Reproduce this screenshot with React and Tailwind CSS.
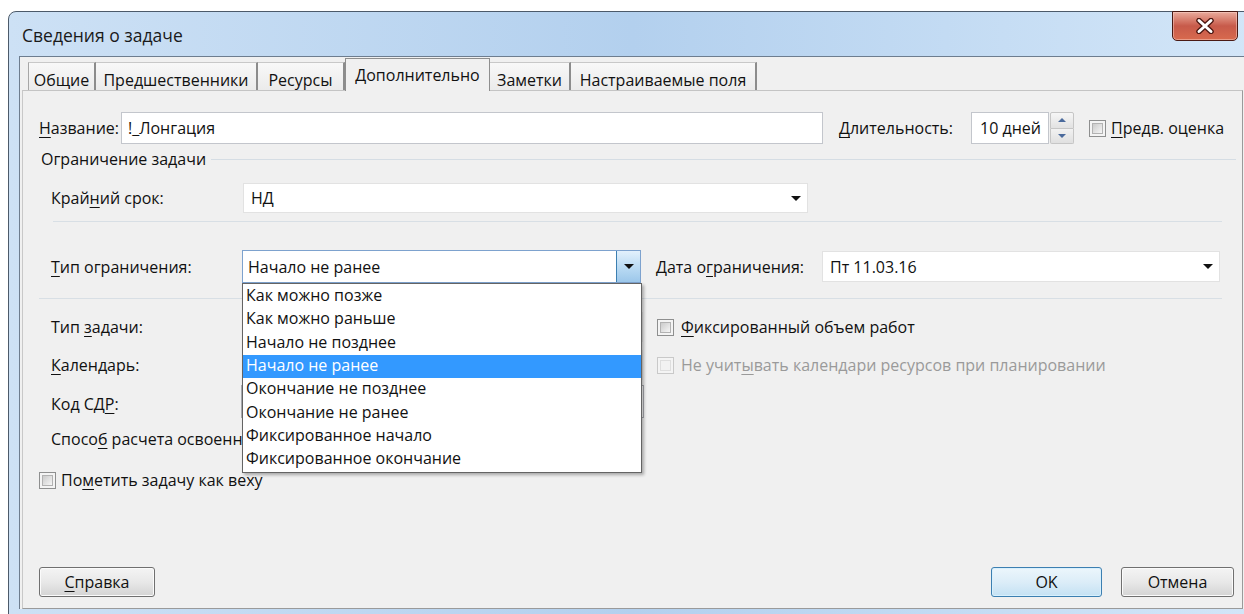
import React from "react";

const TABS = [
  { label: "Общие", w: "w-[68px]" },
  { label: "Предшественники", w: "w-[162px]" },
  { label: "Ресурсы", w: "w-[87px]" },
  { label: "Дополнительно", w: "w-[145px]", active: true },
  { label: "Заметки", w: "w-[81px]" },
  { label: "Настраиваемые поля", w: "w-[186px]" },
];

const OPTIONS = [
  "Как можно позже",
  "Как можно раньше",
  "Начало не позднее",
  "Начало не ранее",
  "Окончание не позднее",
  "Окончание не ранее",
  "Фиксированное начало",
  "Фиксированное окончание",
];

// mnemonic letter
const U = ({ children }) => (
  <span className="underline underline-offset-[3px] decoration-1">{children}</span>
);

const Arrow = () => (
  <svg width="10" height="5" viewBox="0 0 10 5">
    <path d="M0 0h10L5 5z" fill="#111" />
  </svg>
);

function Check({ disabled }) {
  return (
    <span
      className={`inline-flex w-[17px] h-[17px] p-[2px] border ${
        disabled ? "border-[#c9c9c9] bg-[#f4f4f4]" : "border-[#8e8f8f] bg-[#f4f4f4]"
      }`}
    >
      <span
        className={`block w-full h-full border ${
          disabled
            ? "border-[#dedede] bg-[#f2f2f2]"
            : "border-[#b2b2b2] bg-linear-to-br from-[#cbcbcb] to-[#f6f6f6]"
        }`}
      />
    </span>
  );
}

function Combo({ value, className }) {
  return (
    <div className={`flex items-center bg-white border border-[#e2e2e2] ${className}`}>
      <span className="flex-1 pl-[7px] truncate">{value}</span>
      <span className="w-[23px] flex justify-center">
        <Arrow />
      </span>
    </div>
  );
}

function Button({ children, primary, className }) {
  return (
    <div
      className={`h-[30px] flex items-center justify-center rounded-[3px] border ${
        primary
          ? "border-[#3c7fb1] bg-linear-to-b from-[#ecf6fc] via-[#dcedf8] to-[#c4e1f3] shadow-[inset_0_0_0_1px_#d8f0fd]"
          : "border-[#707070] bg-linear-to-b from-[#f4f4f4] via-[#e8e8e8] to-[#d4d4d4] shadow-[inset_0_0_0_1px_#fbfbfb]"
      } ${className}`}
    >
      {children}
    </div>
  );
}

function TypeDropdown() {
  return (
    <div className="relative w-[399px] h-[33px]">
      <div className="flex h-full bg-white border border-[#7da2ce]">
        <span className="flex-1 pl-[5px] flex items-center">Начало не ранее</span>
        <span className="w-[24px] flex items-center justify-center border-l border-[#3c7fb1] bg-linear-to-b from-[#e3f1fc] via-[#bcdcf4] to-[#9cc7ea]">
          <Arrow />
        </span>
      </div>
      {/* open list */}
      <div className="absolute left-0 top-[33px] w-[400px] z-20 bg-white border border-[#646464] py-[1px] shadow-[2px_2px_3px_rgba(0,0,0,0.3)]">
        {OPTIONS.map((o, i) => (
          <div
            key={o}
            className={`h-[23.3px] flex items-center pl-[3px] pb-[3px] leading-none ${
              i === 3 ? "bg-[#3399ff] text-white" : ""
            }`}
          >
            {o}
          </div>
        ))}
      </div>
    </div>
  );
}

export default function App() {
  return (
    <div className="w-[1244px] h-[614px] bg-white overflow-hidden pt-[11px] pl-[8px] text-[16px] leading-[20px] text-[#111] font-['Open_Sans',sans-serif]">
      {/* window frame */}
      <div className="w-[1250px] h-[620px] rounded-tl-[8px] border border-[#4c5a6a] bg-linear-to-r from-[#cde1f5] via-[#b3d0ee] to-[#d3e6f8] flex flex-col">
        {/* title bar */}
        <div className="h-[44px] flex items-start justify-between pl-[13px] pr-[19px]">
          <span className="pt-[13px] text-[17.5px] text-[#1a1a1a]">Сведения о задаче</span>
          <div className="w-[66px] h-[30px] -mt-px rounded-b-[5px] border border-[#4a1a14] bg-linear-to-b from-[#e9aa9c] via-[#c75a4a] to-[#d86a4e] flex items-center justify-center shadow-[inset_0_0_0_1px_rgba(255,220,210,0.45)]">
            <svg width="22" height="16" viewBox="0 0 22 16">
              <path d="M5 2.5l12 11M17 2.5l-12 11" stroke="#4b1610" strokeWidth="5.5" strokeLinecap="round" />
              <path d="M5 2.5l12 11M17 2.5l-12 11" stroke="#fff" strokeWidth="3" strokeLinecap="round" />
            </svg>
          </div>
        </div>

        {/* client area */}
        <div className="ml-[10px] w-[1225px] h-[553px] bg-[#f0f0f0] border-l border-t border-[#6d7d8f] flex flex-col">
          {/* tab strip */}
          <div className="h-[33px] flex items-end pl-[8px] relative z-10">
            {TABS.map((t, i) =>
              t.active ? (
                <div
                  key={t.label}
                  className={`${t.w} h-[33px] -mb-px bg-[#f0f0f0] border-l border-t border-r border-[#8e8e8e] text-center pt-[6px]`}
                >
                  {t.label}
                </div>
              ) : (
                <div
                  key={t.label}
                  className={`${t.w} h-[28px] border-t border-[#c8c8c8] border-r-2 border-r-[#8c8c8c] ${
                    i === 0 ? "border-l border-l-[#a6a6a6]" : ""
                  } bg-linear-to-b from-[#f8f8f8] to-[#ebebeb] text-center pt-[7px] leading-[20px]`}
                >
                  {t.label}
                </div>
              )
            )}
          </div>

          {/* tab panel */}
          <div className="ml-[2px] w-[1221px] flex-1 flex flex-col border border-[#9a9a9a] border-t-[#c4c4c4] border-l-[#c8c8c8] pl-[16px]">
            {/* name / duration */}
            <div className="mt-[21px] h-[32px] flex items-center">
              <span className="w-[82px]">
                <U>Н</U>азвание:
              </span>
              <div className="w-[702px] h-full bg-white border border-[#c3c6cc] flex items-center pl-[6px]">
                !_Лонгация
              </div>
              <span className="ml-[16px] w-[132px]">
                <U>Д</U>лительность:
              </span>
              <div className="w-[78px] h-full bg-white border border-[#c3c6cc] flex items-center pl-[8px]">
                10 дней
              </div>
              <div className="ml-[1px] w-[24px] h-full flex flex-col">
                <span className="flex-1 flex items-center justify-center border border-[#c6c6c6] rounded-t-[2px] bg-linear-to-b from-[#f6f6f6] to-[#e2e2e2]">
                  <svg width="8" height="4" viewBox="0 0 8 4">
                    <path d="M0 4h8L4 0z" fill="#4a6a9c" />
                  </svg>
                </span>
                <span className="flex-1 flex items-center justify-center border border-t-0 border-[#c6c6c6] rounded-b-[2px] bg-linear-to-b from-[#f2f2f2] to-[#e0e0e0]">
                  <svg width="8" height="4" viewBox="0 0 8 4">
                    <path d="M0 0h8L4 4z" fill="#4a6a9c" />
                  </svg>
                </span>
              </div>
              <span className="ml-[15px] flex items-center gap-[5px]">
                <Check />
                <span>
                  <U>П</U>редв. оценка
                </span>
              </span>
            </div>

            {/* constraint group */}
            <div className="mt-[5px] flex items-center pr-[6px]">
              <span className="ml-[2px]">Ограничение задачи</span>
              <span className="ml-[5px] flex-1 h-px bg-[#d5dde4]" />
            </div>

            <div className="mt-[14px] h-[30px] flex items-center pl-[12px]">
              <span className="w-[192px]">
                Край<U>н</U>ий срок:
              </span>
              <Combo value="НД" className="w-[565px] h-full" />
            </div>

            <div className="mt-[8px] ml-[14px] w-[1169px] h-px bg-[#d8dfe5]" />

            <div className="mt-[28px] flex items-center pl-[12px]">
              <span className="w-[191px]">
                <U>Т</U>ип ограничения:
              </span>
              <TypeDropdown />
              <span className="ml-[15px] w-[166px]">
                Дата о<U>г</U>раничения:
              </span>
              <Combo value="Пт 11.03.16" className="w-[398px] h-[31px]" />
            </div>

            <div className="mt-[15px] w-[1183px] h-px bg-[#d8dfe5]" />

            {/* task type / calendar; their fields sit under the open list */}
            <div className="mt-[13px] h-[30px] flex items-center pl-[12px]">
              <span className="w-[192px]">
                Тип <U>з</U>адачи:
              </span>
              <Combo className="w-[400px] h-full" />
              <span className="ml-[14px] flex items-center gap-[7px]">
                <Check />
                <span>
                  <U>Ф</U>иксированный объем работ
                </span>
              </span>
            </div>

            <div className="mt-[8px] h-[30px] flex items-center pl-[12px]">
              <span className="w-[192px]">
                <U>К</U>алендарь:
              </span>
              <Combo className="w-[400px] h-full" />
              <span className="ml-[14px] flex items-center gap-[7px] text-[#9a9a9a]">
                <Check disabled />
                <span>
                  Не учит<U>ы</U>вать календари ресурсов при планировании
                </span>
              </span>
            </div>

            <div className="mt-[5px] h-[33px] flex items-center pl-[12px]">
              <span className="w-[190px] pt-[5px]">
                Код СД<U>Р</U>:
              </span>
              <div className="w-[403px] h-full bg-white border border-[#a9abb0]" />
            </div>

            <div className="mt-[6px] h-[30px] flex items-center pl-[12px]">
              <span className="w-[190px] whitespace-nowrap">
                Спосо<U>б</U> расчета освоенного объема:
              </span>
            </div>

            <div className="mt-[16px] flex items-center gap-[5px]">
              <Check />
              <span>
                По<U>м</U>етить задачу как веху
              </span>
            </div>

            {/* buttons */}
            <div className="mt-auto mb-[11px] flex items-center pr-[8px]">
              <Button className="w-[116px]">
                <span>
                  <U>С</U>правка
                </span>
              </Button>
              <Button primary className="ml-auto w-[111px]">
                OK
              </Button>
              <Button className="ml-[19px] w-[113px]">Отмена</Button>
            </div>
          </div>
        </div>
      </div>
    </div>
  );
}
